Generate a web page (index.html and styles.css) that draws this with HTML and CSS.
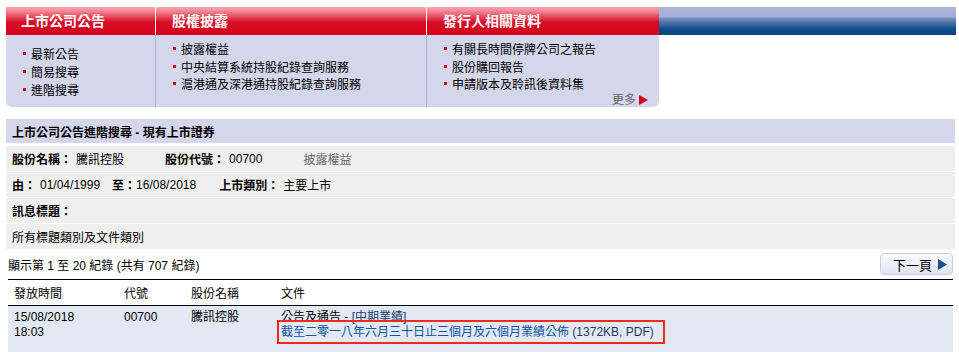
FILE: index.html
```html
<!DOCTYPE html>
<html lang="zh-Hant">
<head>
<meta charset="utf-8">
<title>上市公司公告進階搜尋</title>
<link rel="stylesheet" href="styles.css">
</head>
<body>
<div class="page">
  <div class="nav">
    <div class="menus">
      <div class="menu m1">
        <div class="menu-head">上市公司公告</div>
        <ul class="menu-list">
          <li>最新公告</li>
          <li>簡易搜尋</li>
          <li>進階搜尋</li>
        </ul>
      </div>
      <div class="menu m2">
        <div class="menu-head">股權披露</div>
        <ul class="menu-list">
          <li>披露權益</li>
          <li>中央結算系統持股紀錄查詢服務</li>
          <li>滬港通及深港通持股紀錄查詢服務</li>
        </ul>
      </div>
      <div class="menu m3">
        <div class="menu-head">發行人相關資料</div>
        <ul class="menu-list">
          <li>有關長時間停牌公司之報告</li>
          <li>股份購回報告</li>
          <li>申請版本及聆訊後資料集</li>
        </ul>
        <div class="more">更多<svg class="more-arrow" width="9" height="10" viewBox="0 0 9 10"><polygon points="0,0 9,5 0,10" fill="#d6001c"/></svg></div>
      </div>
    </div>
    <div class="band"></div>
  </div>

  <div class="section">
    <div class="sec-title">上市公司公告進階搜尋 - 現有上市證券</div>
    <div class="sec-row">
      <span class="lbl">股份名稱：</span><span class="val">騰訊控股</span>
      <span class="lbl gap41">股份代號：</span><span class="val">00700</span>
      <span class="grey gap41">披露權益</span>
    </div>
    <div class="sec-row">
      <span class="lbl">由：</span><span class="val">01/04/1999</span>
      <span class="lbl gap12">至：</span><span class="val tight">16/08/2018</span>
      <span class="lbl gap23">上市類別：</span><span class="val">主要上市</span>
    </div>
    <div class="sec-row">
      <span class="lbl">訊息標題：</span>
    </div>
    <div class="sec-row">
      <span>所有標題類別及文件類別</span>
    </div>
  </div>

  <div class="results">
    <div class="count">顯示第 1 至 20 紀錄 (共有 707 紀錄)</div>
    <div class="next-btn">下一頁<svg class="next-arrow" width="9" height="11" viewBox="0 0 9 11"><polygon points="0,0 9,5.5 0,11" fill="#1d4f91"/></svg></div>
  </div>

  <div class="rtable">
    <div class="thead">
      <div>發放時間</div>
      <div>代號</div>
      <div>股份名稱</div>
      <div>文件</div>
    </div>
    <div class="trow">
      <div>15/08/2018<br>18:03</div>
      <div>00700</div>
      <div>騰訊控股</div>
      <div class="doc">
        <div>公告及通告 - <span class="cat">[中期業績]</span></div>
        <div><span class="doc-link">截至二零一八年六月三十日止三個月及六個月業績公佈</span> <span class="doc-size">(1372KB, PDF)</span></div>
        <div class="hl"></div>
      </div>
    </div>
  </div>
</div>
</body>
</html>
```
FILE: styles.css
```css
* { box-sizing: border-box; margin: 0; padding: 0; }
body {
  font-family: "Liberation Sans", "Noto Sans CJK TC", sans-serif;
  font-size: 12px;
  color: #000;
  background: #fff;
}
.page { width: 950px; margin: 7px 0 0 6px; }

/* top navigation */
.nav { display: flex; align-items: flex-start; }
.menus {
  display: flex;
  width: 653px;
  height: 100px;
  background: #d4d6ec;
  border-radius: 0 0 6px 6px;
  overflow: hidden;
}
.menu { display: flex; flex-direction: column; border-right: 1px solid #a9b3d8; }
.menu:last-child { border-right: 0; }
.m1 { width: 150px; }
.m2 { width: 271px; }
.m3 { width: 232px; }
.menu-head {
  height: 28px;
  line-height: 28px;
  padding-left: 16px;
  margin-right: -1px;
  border-right: 1px solid #fff;
  color: #fff;
  font-size: 14px;
  font-weight: bold;
  background: linear-gradient(to bottom, #fca7af 0px, #f48894 4px, #e6475a 10px, #d70d26 15px, #d6001c 28px);
}
.m1 .menu-head { padding-left: 15px; }
.m3 .menu-head { margin-right: 0; border-right: 0; }
.menu-list { list-style: none; padding: 5px 0 0 17px; }
.m1 .menu-list { padding-top: 9px; }
.menu-list li { display: flex; align-items: center; height: 17.5px; }
.m1 .menu-list li { height: 18px; }
.menu-list li::before {
  content: "";
  width: 3px;
  height: 3px;
  background: #c8001e;
  margin-right: 5px;
  flex: none;
}
.more {
  margin-top: auto;
  align-self: flex-end;
  display: flex;
  align-items: center;
  gap: 3px;
  color: #666;
  font-size: 12px;
  line-height: 12px;
  padding: 0 11px 1px 0;
}
.band {
  flex: 1;
  height: 28px;
  background: linear-gradient(to bottom, #acb2d8 0px, #a8afd5 10px, #7891c1 11px, #4a70a8 16px, #0f4d87 22px, #00457f 28px);
}

/* search criteria */
.section { margin-top: 12px; width: 949px; display: flex; flex-direction: column; gap: 1px; }
.sec-title {
  height: 24px;
  margin-bottom: 2px;
  background: #d4d6ec;
  font-weight: bold;
  padding-left: 6px;
  display: flex;
  align-items: center;
}
.sec-row {
  height: 25px;
  background: #efefef;
  padding-left: 6px;
  display: flex;
  align-items: center;
}
.lbl { font-weight: bold; }
.val { margin-left: 4px; }
.val.tight { margin-left: 0; }
.grey { color: #666; }
.gap41 { margin-left: 41px; }
.gap12 { margin-left: 12px; }
.gap23 { margin-left: 23px; }

/* results bar */
.results {
  margin: 4px 3px 0 2px;
  height: 22px;
  display: flex;
  align-items: center;
  justify-content: space-between;
}
.count { font-size: 12px; }
.next-btn {
  width: 73px;
  height: 22px;
  border: 1px solid #c9cee2;
  border-radius: 4px;
  background: linear-gradient(to bottom, #fbfbff, #dfe2f2);
  display: flex;
  align-items: center;
  padding-left: 12px;
  font-size: 13px;
  gap: 6px;
}

/* results table */
.rtable { margin: 4px 3px 0 2px; }
.thead, .trow { display: grid; grid-template-columns: 110px 67px 90px 1fr; }
.thead {
  height: 27px;
  border-top: 1px solid #000;
  border-bottom: 1px solid #000;
  align-items: center;
}
.thead > div { padding-left: 6px; }
.trow { background: #e3e9f4; min-height: 50px; line-height: 15px; }
.trow > div { padding: 4px 0 6px 6px; }
.doc { position: relative; }
.cat { color: #1b3d6e; }
.doc-link { color: #0d55a2; }
.doc-size { color: #1f3a66; }
.hl {
  position: absolute;
  left: 2px;
  top: 14px;
  width: 388px;
  height: 24px;
  border: 2px solid #f0281e;
}
```
